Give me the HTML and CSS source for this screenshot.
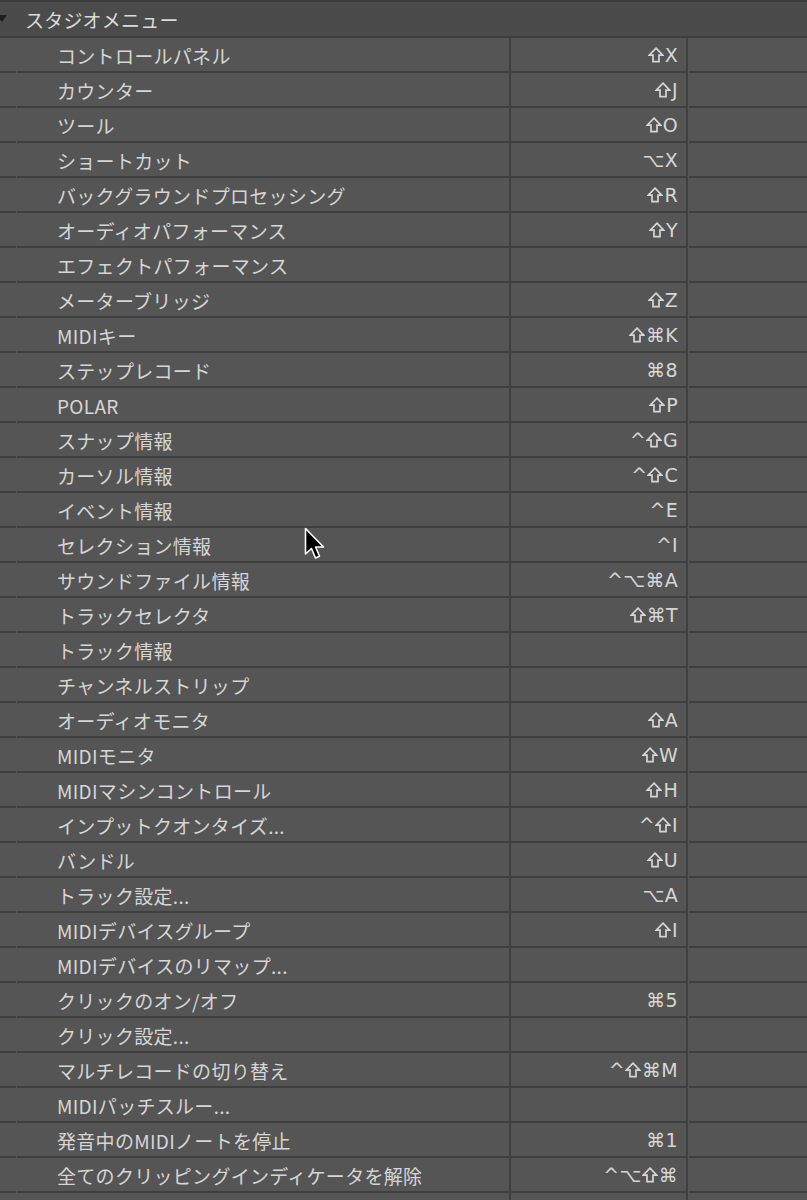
FILE: index.html
```html
<!DOCTYPE html>
<html lang="ja">
<head>
<meta charset="utf-8">
<link rel="stylesheet" href="styles.css">
</head>
<body>
<div class="panel">
  <div class="header"><span class="tri"></span><span class="title">スタジオメニュー</span></div>
  <div class="row"><div class="c1"></div><div class="c2">コントロールパネル</div><div class="c3"><svg class="sh" viewBox="0 0 16 16"><path d="M8 1.2 L14.8 8.2 L11 8.2 L11 14.6 L5 14.6 L5 8.2 L1.2 8.2 Z"/></svg>X</div><div class="c4"></div></div>
  <div class="row"><div class="c1"></div><div class="c2">カウンター</div><div class="c3"><svg class="sh" viewBox="0 0 16 16"><path d="M8 1.2 L14.8 8.2 L11 8.2 L11 14.6 L5 14.6 L5 8.2 L1.2 8.2 Z"/></svg>J</div><div class="c4"></div></div>
  <div class="row"><div class="c1"></div><div class="c2">ツール</div><div class="c3"><svg class="sh" viewBox="0 0 16 16"><path d="M8 1.2 L14.8 8.2 L11 8.2 L11 14.6 L5 14.6 L5 8.2 L1.2 8.2 Z"/></svg>O</div><div class="c4"></div></div>
  <div class="row"><div class="c1"></div><div class="c2">ショートカット</div><div class="c3">⌥X</div><div class="c4"></div></div>
  <div class="row"><div class="c1"></div><div class="c2">バックグラウンドプロセッシング</div><div class="c3"><svg class="sh" viewBox="0 0 16 16"><path d="M8 1.2 L14.8 8.2 L11 8.2 L11 14.6 L5 14.6 L5 8.2 L1.2 8.2 Z"/></svg>R</div><div class="c4"></div></div>
  <div class="row"><div class="c1"></div><div class="c2">オーディオパフォーマンス</div><div class="c3"><svg class="sh" viewBox="0 0 16 16"><path d="M8 1.2 L14.8 8.2 L11 8.2 L11 14.6 L5 14.6 L5 8.2 L1.2 8.2 Z"/></svg>Y</div><div class="c4"></div></div>
  <div class="row"><div class="c1"></div><div class="c2">エフェクトパフォーマンス</div><div class="c3"></div><div class="c4"></div></div>
  <div class="row"><div class="c1"></div><div class="c2">メーターブリッジ</div><div class="c3"><svg class="sh" viewBox="0 0 16 16"><path d="M8 1.2 L14.8 8.2 L11 8.2 L11 14.6 L5 14.6 L5 8.2 L1.2 8.2 Z"/></svg>Z</div><div class="c4"></div></div>
  <div class="row"><div class="c1"></div><div class="c2">MIDIキー</div><div class="c3"><svg class="sh" viewBox="0 0 16 16"><path d="M8 1.2 L14.8 8.2 L11 8.2 L11 14.6 L5 14.6 L5 8.2 L1.2 8.2 Z"/></svg>⌘K</div><div class="c4"></div></div>
  <div class="row"><div class="c1"></div><div class="c2">ステップレコード</div><div class="c3">⌘8</div><div class="c4"></div></div>
  <div class="row"><div class="c1"></div><div class="c2">POLAR</div><div class="c3"><svg class="sh" viewBox="0 0 16 16"><path d="M8 1.2 L14.8 8.2 L11 8.2 L11 14.6 L5 14.6 L5 8.2 L1.2 8.2 Z"/></svg>P</div><div class="c4"></div></div>
  <div class="row"><div class="c1"></div><div class="c2">スナップ情報</div><div class="c3">^<svg class="sh" viewBox="0 0 16 16"><path d="M8 1.2 L14.8 8.2 L11 8.2 L11 14.6 L5 14.6 L5 8.2 L1.2 8.2 Z"/></svg>G</div><div class="c4"></div></div>
  <div class="row"><div class="c1"></div><div class="c2">カーソル情報</div><div class="c3">^<svg class="sh" viewBox="0 0 16 16"><path d="M8 1.2 L14.8 8.2 L11 8.2 L11 14.6 L5 14.6 L5 8.2 L1.2 8.2 Z"/></svg>C</div><div class="c4"></div></div>
  <div class="row"><div class="c1"></div><div class="c2">イベント情報</div><div class="c3">^E</div><div class="c4"></div></div>
  <div class="row"><div class="c1"></div><div class="c2">セレクション情報</div><div class="c3">^I</div><div class="c4"></div></div>
  <div class="row"><div class="c1"></div><div class="c2">サウンドファイル情報</div><div class="c3">^⌥⌘A</div><div class="c4"></div></div>
  <div class="row"><div class="c1"></div><div class="c2">トラックセレクタ</div><div class="c3"><svg class="sh" viewBox="0 0 16 16"><path d="M8 1.2 L14.8 8.2 L11 8.2 L11 14.6 L5 14.6 L5 8.2 L1.2 8.2 Z"/></svg>⌘T</div><div class="c4"></div></div>
  <div class="row"><div class="c1"></div><div class="c2">トラック情報</div><div class="c3"></div><div class="c4"></div></div>
  <div class="row"><div class="c1"></div><div class="c2">チャンネルストリップ</div><div class="c3"></div><div class="c4"></div></div>
  <div class="row"><div class="c1"></div><div class="c2">オーディオモニタ</div><div class="c3"><svg class="sh" viewBox="0 0 16 16"><path d="M8 1.2 L14.8 8.2 L11 8.2 L11 14.6 L5 14.6 L5 8.2 L1.2 8.2 Z"/></svg>A</div><div class="c4"></div></div>
  <div class="row"><div class="c1"></div><div class="c2">MIDIモニタ</div><div class="c3"><svg class="sh" viewBox="0 0 16 16"><path d="M8 1.2 L14.8 8.2 L11 8.2 L11 14.6 L5 14.6 L5 8.2 L1.2 8.2 Z"/></svg>W</div><div class="c4"></div></div>
  <div class="row"><div class="c1"></div><div class="c2">MIDIマシンコントロール</div><div class="c3"><svg class="sh" viewBox="0 0 16 16"><path d="M8 1.2 L14.8 8.2 L11 8.2 L11 14.6 L5 14.6 L5 8.2 L1.2 8.2 Z"/></svg>H</div><div class="c4"></div></div>
  <div class="row"><div class="c1"></div><div class="c2">インプットクオンタイズ...</div><div class="c3">^<svg class="sh" viewBox="0 0 16 16"><path d="M8 1.2 L14.8 8.2 L11 8.2 L11 14.6 L5 14.6 L5 8.2 L1.2 8.2 Z"/></svg>I</div><div class="c4"></div></div>
  <div class="row"><div class="c1"></div><div class="c2">バンドル</div><div class="c3"><svg class="sh" viewBox="0 0 16 16"><path d="M8 1.2 L14.8 8.2 L11 8.2 L11 14.6 L5 14.6 L5 8.2 L1.2 8.2 Z"/></svg>U</div><div class="c4"></div></div>
  <div class="row"><div class="c1"></div><div class="c2">トラック設定...</div><div class="c3">⌥A</div><div class="c4"></div></div>
  <div class="row"><div class="c1"></div><div class="c2">MIDIデバイスグループ</div><div class="c3"><svg class="sh" viewBox="0 0 16 16"><path d="M8 1.2 L14.8 8.2 L11 8.2 L11 14.6 L5 14.6 L5 8.2 L1.2 8.2 Z"/></svg>I</div><div class="c4"></div></div>
  <div class="row"><div class="c1"></div><div class="c2">MIDIデバイスのリマップ...</div><div class="c3"></div><div class="c4"></div></div>
  <div class="row"><div class="c1"></div><div class="c2">クリックのオン/オフ</div><div class="c3">⌘5</div><div class="c4"></div></div>
  <div class="row"><div class="c1"></div><div class="c2">クリック設定...</div><div class="c3"></div><div class="c4"></div></div>
  <div class="row"><div class="c1"></div><div class="c2">マルチレコードの切り替え</div><div class="c3">^<svg class="sh" viewBox="0 0 16 16"><path d="M8 1.2 L14.8 8.2 L11 8.2 L11 14.6 L5 14.6 L5 8.2 L1.2 8.2 Z"/></svg>⌘M</div><div class="c4"></div></div>
  <div class="row"><div class="c1"></div><div class="c2">MIDIパッチスルー...</div><div class="c3"></div><div class="c4"></div></div>
  <div class="row"><div class="c1"></div><div class="c2">発音中のMIDIノートを停止</div><div class="c3">⌘1</div><div class="c4"></div></div>
  <div class="row"><div class="c1"></div><div class="c2">全てのクリッピングインディケータを解除</div><div class="c3">^⌥<svg class="sh" viewBox="0 0 16 16"><path d="M8 1.2 L14.8 8.2 L11 8.2 L11 14.6 L5 14.6 L5 8.2 L1.2 8.2 Z"/></svg>⌘</div><div class="c4"></div></div>
  <div class="row"><div class="c1"></div><div class="c2"></div><div class="c3"></div><div class="c4"></div></div>
  <svg class="cursor" width="24" height="36" viewBox="0 0 24 36">
    <path d="M1.5 1.5 L1.5 27 L7.5 21.5 L11.5 31 L15.5 29.2 L11.6 20 L19.5 20 Z" fill="#000" stroke="#fff" stroke-width="1.6" stroke-linejoin="round"/>
  </svg>
</div>
</body>
</html>
```

FILE: styles.css
```css
html, body {
  margin: 0;
  padding: 0;
  background: #555555;
}
.panel {
  position: relative;
  width: 807px;
  height: 1200px;
  overflow: hidden;
  font-family: "Noto Sans CJK JP", "Noto Sans", sans-serif;
  color: #d6d6d6;
  background: #555555;
}
.header {
  box-sizing: border-box;
  height: 38px;
  border-top: 2px solid #3b3b3b;
  border-bottom: 2px solid #3e3e3e;
  background: #4b4b4b;
  display: flex;
  align-items: center;
}
.tri {
  width: 0;
  height: 0;
  margin-left: -3px;
  margin-top: -1px;
  border-left: 5px solid transparent;
  border-right: 5px solid transparent;
  border-top: 7px solid #1e1e1e;
}
.title {
  margin-left: 18px;
  font-size: 19px;
  color: #dadada;
  letter-spacing: 0.2px;
}
.row {
  display: grid;
  grid-template-columns: 16px 492px 178px 1fr;
  column-gap: 1px;
  height: 35px;
  background: #555555;
}
.row > div {
  box-sizing: border-box;
  border-bottom: 2px solid #3f3f3f;
  display: flex;
  align-items: center;
  font-size: 19px;
  letter-spacing: 0.3px;
}
.c2 {
  padding-left: 40px;
  padding-top: 1px;
}
.c3 {
  border-left: 2px solid #404040;
  border-right: 2px solid #404040;
  justify-content: flex-end;
  padding-right: 8px;
  font-family: "DejaVu Sans", "Noto Sans CJK JP", sans-serif;
  font-size: 17px;
  letter-spacing: 1px;
  margin-left: -1px;
}
.sh {
  width: 16px;
  height: 16px;
  margin-right: 1px;
  fill: none;
  stroke: #d6d6d6;
  stroke-width: 1.7;
  stroke-linejoin: miter;
}
.cursor {
  position: absolute;
  left: 304px;
  top: 527px;
}
```
